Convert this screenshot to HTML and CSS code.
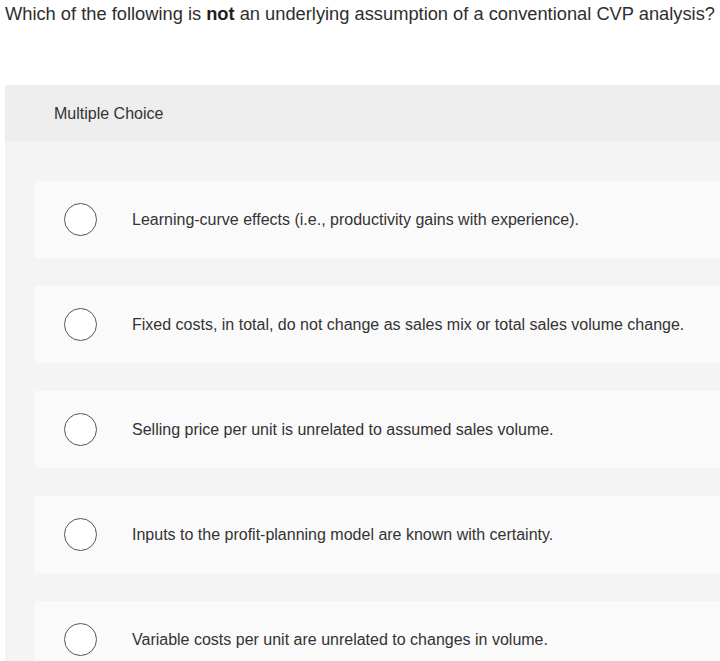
FILE: index.html
```html
<!DOCTYPE html>
<html>
<head>
<meta charset="utf-8">
<link rel="stylesheet" href="styles.css">
</head>
<body>
<div class="question">Which of the following is <b>not</b> an underlying assumption of a conventional CVP analysis?</div>
<div class="panel">
  <div class="panel-head">Multiple Choice</div>
  <div class="panel-body">
    <div class="option"><span class="radio"></span><span class="label">Learning-curve effects (i.e., productivity gains with experience).</span></div>
    <div class="option"><span class="radio"></span><span class="label">Fixed costs, in total, do not change as sales mix or total sales volume change.</span></div>
    <div class="option"><span class="radio"></span><span class="label">Selling price per unit is unrelated to assumed sales volume.</span></div>
    <div class="option"><span class="radio"></span><span class="label">Inputs to the profit-planning model are known with certainty.</span></div>
    <div class="option"><span class="radio"></span><span class="label">Variable costs per unit are unrelated to changes in volume.</span></div>
  </div>
</div>
</body>
</html>
```
FILE: styles.css
```css
html, body {
  margin: 0;
  padding: 0;
  background: #ffffff;
  height: 661px;
  overflow: hidden;
}
body {
  font-family: "Liberation Sans", Arial, sans-serif;
  color: #333333;
}
.question {
  font-size: 18.3px;
  line-height: 28px;
  padding-left: 5px;
  white-space: nowrap;
  color: #2e2e2e;
}
.question b {
  font-weight: bold;
  color: #1e1e1e;
}
.panel {
  margin-top: 57px;
  margin-left: 5px;
  background: #f4f4f4;
}
.panel-head {
  height: 57px;
  background: #eeeeee;
  display: flex;
  align-items: center;
  padding-left: 49px;
  font-size: 16px;
  color: #333333;
}
.panel-body {
  padding: 39px 0 0 30px;
}
.option {
  height: 77px;
  margin-bottom: 28px;
  background: #fafafa;
  display: flex;
  align-items: center;
  padding-left: 29px;
}
.radio {
  flex: none;
  width: 31px;
  height: 31px;
  border: 1.7px solid #555555;
  border-radius: 50%;
  background: #ffffff;
}
.label {
  margin-left: 35px;
  font-size: 16px;
  color: #333333;
  white-space: nowrap;
}
```
